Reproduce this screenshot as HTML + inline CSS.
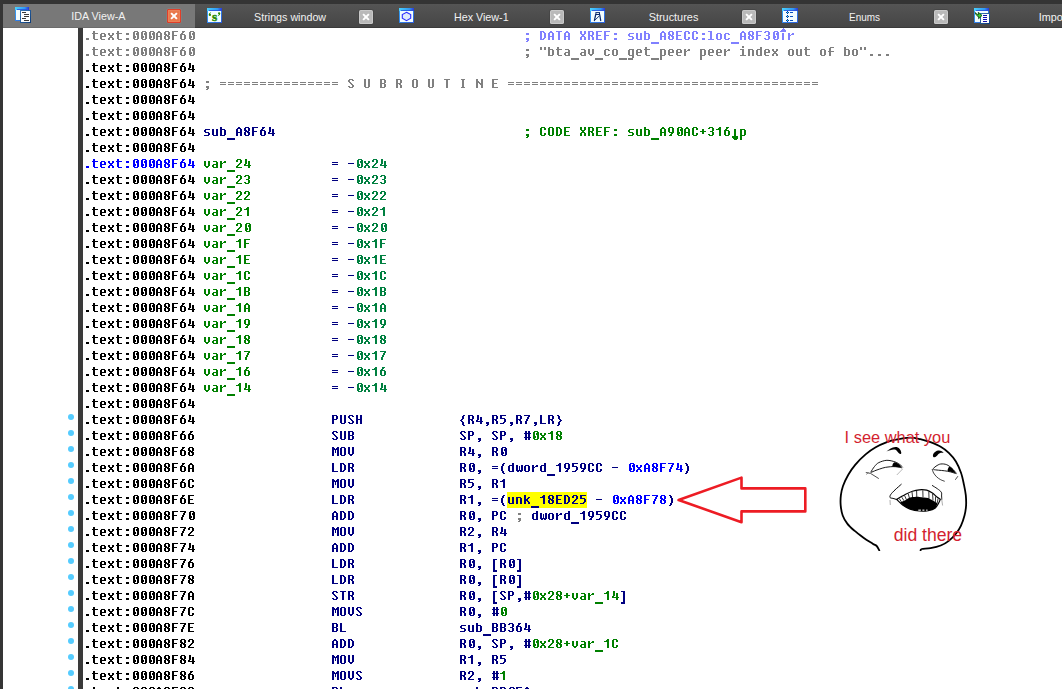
<!DOCTYPE html>
<html><head><meta charset="utf-8"><title>IDA</title>
<style>
html,body{margin:0;padding:0;background:#fff;}
body{width:1062px;height:689px;overflow:hidden;position:relative;font-family:"Liberation Sans",sans-serif;}
#bar{position:absolute;left:78px;top:28px;width:5px;height:661px;background:#3a3a3a;}
.d{position:absolute;left:68px;width:6px;height:6px;border-radius:3px;background:#55ccff;}
</style></head><body>
<div id="bar"></div>
<i class="d" style="top:414px"></i>
<i class="d" style="top:430px"></i>
<i class="d" style="top:446px"></i>
<i class="d" style="top:462px"></i>
<i class="d" style="top:478px"></i>
<i class="d" style="top:494px"></i>
<i class="d" style="top:510px"></i>
<i class="d" style="top:526px"></i>
<i class="d" style="top:542px"></i>
<i class="d" style="top:558px"></i>
<i class="d" style="top:574px"></i>
<i class="d" style="top:590px"></i>
<i class="d" style="top:606px"></i>
<i class="d" style="top:622px"></i>
<i class="d" style="top:638px"></i>
<i class="d" style="top:654px"></i>
<i class="d" style="top:670px"></i>
<i class="d" style="top:686px"></i>
<svg id="px" width="1062" height="689" viewBox="0 0 1062 689" style="position:absolute;left:0;top:0" shape-rendering="crispEdges"><defs><path id="g22" d="M0 4h2v1h-2zM4 4h2v1h-2zM0 5h2v1h-2zM4 5h2v1h-2zM0 6h2v1h-2zM4 6h2v1h-2z"/><path id="g23" d="M1 4h2v1h-2zM4 4h2v1h-2zM1 5h2v1h-2zM4 5h2v1h-2zM0 6h7v1h-7zM1 7h2v1h-2zM4 7h2v1h-2zM1 8h2v1h-2zM4 8h2v1h-2zM1 9h2v1h-2zM4 9h2v1h-2zM0 10h7v1h-7zM1 11h2v1h-2zM4 11h2v1h-2zM1 12h2v1h-2zM4 12h2v1h-2z"/><path id="g28" d="M3 4h2v1h-2zM2 5h2v1h-2zM2 6h2v1h-2zM1 7h2v1h-2zM1 8h2v1h-2zM1 9h2v1h-2zM1 10h2v1h-2zM1 11h2v1h-2zM2 12h2v1h-2zM2 13h2v1h-2zM3 14h2v1h-2z"/><path id="g29" d="M1 4h2v1h-2zM2 5h2v1h-2zM2 6h2v1h-2zM3 7h2v1h-2zM3 8h2v1h-2zM3 9h2v1h-2zM3 10h2v1h-2zM3 11h2v1h-2zM2 12h2v1h-2zM2 13h2v1h-2zM1 14h2v1h-2z"/><path id="g2b" d="M2 6h2v1h-2zM2 7h2v1h-2zM0 8h6v1h-6zM2 9h2v1h-2zM2 10h2v1h-2z"/><path id="g2c" d="M2 11h3v1h-3zM2 12h3v1h-3zM3 13h2v1h-2zM2 14h2v1h-2z"/><path id="g2d" d="M0 8h6v1h-6z"/><path id="g2e" d="M2 11h3v1h-3zM2 12h3v1h-3z"/><path id="g30" d="M2 4h4v1h-4zM1 5h2v1h-2zM5 5h2v1h-2zM1 6h2v1h-2zM4 6h3v1h-3zM1 7h2v1h-2zM4 7h3v1h-3zM1 8h2v1h-2zM5 8h2v1h-2zM1 9h3v1h-3zM5 9h2v1h-2zM1 10h3v1h-3zM5 10h2v1h-2zM1 11h2v1h-2zM5 11h2v1h-2zM2 12h4v1h-4z"/><path id="g31" d="M3 4h2v1h-2zM2 5h3v1h-3zM0 6h5v1h-5zM3 7h2v1h-2zM3 8h2v1h-2zM3 9h2v1h-2zM3 10h2v1h-2zM3 11h2v1h-2zM3 12h2v1h-2z"/><path id="g32" d="M1 4h4v1h-4zM0 5h2v1h-2zM4 5h2v1h-2zM0 6h2v1h-2zM4 6h2v1h-2zM4 7h2v1h-2zM3 8h2v1h-2zM2 9h2v1h-2zM1 10h2v1h-2zM0 11h2v1h-2zM0 12h6v1h-6z"/><path id="g33" d="M1 4h4v1h-4zM0 5h2v1h-2zM4 5h2v1h-2zM4 6h2v1h-2zM4 7h2v1h-2zM2 8h3v1h-3zM4 9h2v1h-2zM4 10h2v1h-2zM0 11h2v1h-2zM4 11h2v1h-2zM1 12h4v1h-4z"/><path id="g34" d="M1 4h2v1h-2zM1 5h2v1h-2zM1 6h2v1h-2zM4 6h2v1h-2zM1 7h2v1h-2zM4 7h2v1h-2zM1 8h2v1h-2zM4 8h2v1h-2zM0 9h2v1h-2zM4 9h2v1h-2zM0 10h7v1h-7zM4 11h2v1h-2zM4 12h2v1h-2z"/><path id="g35" d="M0 4h6v1h-6zM0 5h2v1h-2zM0 6h2v1h-2zM0 7h5v1h-5zM4 8h2v1h-2zM4 9h2v1h-2zM4 10h2v1h-2zM3 11h2v1h-2zM0 12h4v1h-4z"/><path id="g36" d="M2 4h3v1h-3zM2 5h2v1h-2zM1 6h2v1h-2zM0 7h5v1h-5zM0 8h2v1h-2zM4 8h2v1h-2zM0 9h2v1h-2zM4 9h2v1h-2zM0 10h2v1h-2zM4 10h2v1h-2zM0 11h2v1h-2zM4 11h2v1h-2zM1 12h4v1h-4z"/><path id="g37" d="M0 4h6v1h-6zM4 5h2v1h-2zM3 6h2v1h-2zM3 7h2v1h-2zM2 8h2v1h-2zM2 9h2v1h-2zM1 10h2v1h-2zM1 11h2v1h-2zM1 12h2v1h-2z"/><path id="g38" d="M1 4h4v1h-4zM0 5h2v1h-2zM4 5h2v1h-2zM0 6h2v1h-2zM4 6h2v1h-2zM0 7h3v1h-3zM4 7h2v1h-2zM1 8h4v1h-4zM0 9h2v1h-2zM3 9h3v1h-3zM0 10h2v1h-2zM4 10h2v1h-2zM0 11h2v1h-2zM4 11h2v1h-2zM1 12h4v1h-4z"/><path id="g39" d="M1 4h4v1h-4zM0 5h2v1h-2zM4 5h2v1h-2zM0 6h2v1h-2zM4 6h2v1h-2zM0 7h2v1h-2zM4 7h2v1h-2zM0 8h2v1h-2zM4 8h2v1h-2zM1 9h5v1h-5zM3 10h2v1h-2zM2 11h2v1h-2zM1 12h3v1h-3z"/><path id="g3a" d="M2 6h3v1h-3zM2 7h3v1h-3zM2 11h3v1h-3zM2 12h3v1h-3z"/><path id="g3b" d="M2 6h3v1h-3zM2 7h3v1h-3zM2 11h3v1h-3zM2 12h3v1h-3zM3 13h2v1h-2zM2 14h2v1h-2z"/><path id="g3d" d="M0 7h6v1h-6zM0 9h6v1h-6z"/><path id="g41" d="M2 4h2v1h-2zM1 5h4v1h-4zM0 6h2v1h-2zM4 6h2v1h-2zM0 7h2v1h-2zM4 7h2v1h-2zM0 8h2v1h-2zM4 8h2v1h-2zM0 9h6v1h-6zM0 10h2v1h-2zM4 10h2v1h-2zM0 11h2v1h-2zM4 11h2v1h-2zM0 12h2v1h-2zM4 12h2v1h-2z"/><path id="g42" d="M0 4h5v1h-5zM0 5h2v1h-2zM4 5h2v1h-2zM0 6h2v1h-2zM4 6h2v1h-2zM0 7h2v1h-2zM4 7h2v1h-2zM0 8h5v1h-5zM0 9h2v1h-2zM4 9h2v1h-2zM0 10h2v1h-2zM4 10h2v1h-2zM0 11h2v1h-2zM4 11h2v1h-2zM0 12h5v1h-5z"/><path id="g43" d="M1 4h4v1h-4zM0 5h2v1h-2zM4 5h2v1h-2zM0 6h2v1h-2zM4 6h2v1h-2zM0 7h2v1h-2zM0 8h2v1h-2zM0 9h2v1h-2zM0 10h2v1h-2zM4 10h2v1h-2zM0 11h2v1h-2zM4 11h2v1h-2zM1 12h4v1h-4z"/><path id="g44" d="M0 4h4v1h-4zM0 5h2v1h-2zM3 5h2v1h-2zM0 6h2v1h-2zM4 6h2v1h-2zM0 7h2v1h-2zM4 7h2v1h-2zM0 8h2v1h-2zM4 8h2v1h-2zM0 9h2v1h-2zM4 9h2v1h-2zM0 10h2v1h-2zM4 10h2v1h-2zM0 11h2v1h-2zM3 11h2v1h-2zM0 12h4v1h-4z"/><path id="g45" d="M0 4h6v1h-6zM0 5h2v1h-2zM0 6h2v1h-2zM0 7h2v1h-2zM0 8h5v1h-5zM0 9h2v1h-2zM0 10h2v1h-2zM0 11h2v1h-2zM0 12h6v1h-6z"/><path id="g46" d="M0 4h6v1h-6zM0 5h2v1h-2zM0 6h2v1h-2zM0 7h2v1h-2zM0 8h5v1h-5zM0 9h2v1h-2zM0 10h2v1h-2zM0 11h2v1h-2zM0 12h2v1h-2z"/><path id="g48" d="M0 4h2v1h-2zM4 4h2v1h-2zM0 5h2v1h-2zM4 5h2v1h-2zM0 6h2v1h-2zM4 6h2v1h-2zM0 7h2v1h-2zM4 7h2v1h-2zM0 8h6v1h-6zM0 9h2v1h-2zM4 9h2v1h-2zM0 10h2v1h-2zM4 10h2v1h-2zM0 11h2v1h-2zM4 11h2v1h-2zM0 12h2v1h-2zM4 12h2v1h-2z"/><path id="g49" d="M1 4h4v1h-4zM2 5h2v1h-2zM2 6h2v1h-2zM2 7h2v1h-2zM2 8h2v1h-2zM2 9h2v1h-2zM2 10h2v1h-2zM2 11h2v1h-2zM1 12h4v1h-4z"/><path id="g4c" d="M0 4h2v1h-2zM0 5h2v1h-2zM0 6h2v1h-2zM0 7h2v1h-2zM0 8h2v1h-2zM0 9h2v1h-2zM0 10h2v1h-2zM0 11h2v1h-2zM0 12h6v1h-6z"/><path id="g4d" d="M0 4h2v1h-2zM5 4h2v1h-2zM0 5h3v1h-3zM4 5h3v1h-3zM0 6h7v1h-7zM0 7h2v1h-2zM3 7h1v1h-1zM5 7h2v1h-2zM0 8h2v1h-2zM3 8h1v1h-1zM5 8h2v1h-2zM0 9h2v1h-2zM3 9h1v1h-1zM5 9h2v1h-2zM0 10h2v1h-2zM5 10h2v1h-2zM0 11h2v1h-2zM5 11h2v1h-2zM0 12h2v1h-2zM5 12h2v1h-2z"/><path id="g4e" d="M0 4h2v1h-2zM5 4h2v1h-2zM0 5h2v1h-2zM5 5h2v1h-2zM0 6h3v1h-3zM5 6h2v1h-2zM0 7h4v1h-4zM5 7h2v1h-2zM0 8h2v1h-2zM3 8h4v1h-4zM0 9h2v1h-2zM4 9h3v1h-3zM0 10h2v1h-2zM5 10h2v1h-2zM0 11h2v1h-2zM5 11h2v1h-2zM0 12h2v1h-2zM5 12h2v1h-2z"/><path id="g4f" d="M1 4h4v1h-4zM0 5h2v1h-2zM4 5h2v1h-2zM0 6h2v1h-2zM4 6h2v1h-2zM0 7h2v1h-2zM4 7h2v1h-2zM0 8h2v1h-2zM4 8h2v1h-2zM0 9h2v1h-2zM4 9h2v1h-2zM0 10h2v1h-2zM4 10h2v1h-2zM0 11h2v1h-2zM4 11h2v1h-2zM1 12h4v1h-4z"/><path id="g50" d="M0 4h5v1h-5zM0 5h2v1h-2zM4 5h2v1h-2zM0 6h2v1h-2zM4 6h2v1h-2zM0 7h2v1h-2zM4 7h2v1h-2zM0 8h5v1h-5zM0 9h2v1h-2zM0 10h2v1h-2zM0 11h2v1h-2zM0 12h2v1h-2z"/><path id="g52" d="M0 4h5v1h-5zM0 5h2v1h-2zM4 5h2v1h-2zM0 6h2v1h-2zM4 6h2v1h-2zM0 7h2v1h-2zM4 7h2v1h-2zM0 8h5v1h-5zM0 9h2v1h-2zM3 9h2v1h-2zM0 10h2v1h-2zM4 10h2v1h-2zM0 11h2v1h-2zM4 11h2v1h-2zM0 12h2v1h-2zM4 12h2v1h-2z"/><path id="g53" d="M1 4h4v1h-4zM0 5h2v1h-2zM4 5h2v1h-2zM0 6h2v1h-2zM1 7h2v1h-2zM2 8h2v1h-2zM3 9h2v1h-2zM4 10h2v1h-2zM0 11h2v1h-2zM4 11h2v1h-2zM1 12h4v1h-4z"/><path id="g54" d="M0 4h6v1h-6zM2 5h2v1h-2zM2 6h2v1h-2zM2 7h2v1h-2zM2 8h2v1h-2zM2 9h2v1h-2zM2 10h2v1h-2zM2 11h2v1h-2zM2 12h2v1h-2z"/><path id="g55" d="M0 4h2v1h-2zM4 4h2v1h-2zM0 5h2v1h-2zM4 5h2v1h-2zM0 6h2v1h-2zM4 6h2v1h-2zM0 7h2v1h-2zM4 7h2v1h-2zM0 8h2v1h-2zM4 8h2v1h-2zM0 9h2v1h-2zM4 9h2v1h-2zM0 10h2v1h-2zM4 10h2v1h-2zM0 11h2v1h-2zM4 11h2v1h-2zM1 12h4v1h-4z"/><path id="g56" d="M0 4h2v1h-2zM4 4h2v1h-2zM0 5h2v1h-2zM4 5h2v1h-2zM0 6h2v1h-2zM4 6h2v1h-2zM0 7h2v1h-2zM4 7h2v1h-2zM0 8h2v1h-2zM4 8h2v1h-2zM0 9h2v1h-2zM4 9h2v1h-2zM0 10h2v1h-2zM4 10h2v1h-2zM1 11h4v1h-4zM2 12h2v1h-2z"/><path id="g58" d="M0 4h2v1h-2zM4 4h2v1h-2zM0 5h2v1h-2zM4 5h2v1h-2zM0 6h2v1h-2zM4 6h2v1h-2zM1 7h4v1h-4zM2 8h2v1h-2zM1 9h4v1h-4zM0 10h2v1h-2zM4 10h2v1h-2zM0 11h2v1h-2zM4 11h2v1h-2zM0 12h2v1h-2zM4 12h2v1h-2z"/><path id="g5b" d="M1 4h4v1h-4zM1 5h2v1h-2zM1 6h2v1h-2zM1 7h2v1h-2zM1 8h2v1h-2zM1 9h2v1h-2zM1 10h2v1h-2zM1 11h2v1h-2zM1 12h2v1h-2zM1 13h2v1h-2zM1 14h2v1h-2zM1 15h4v1h-4zM1 16h4v1h-4z"/><path id="g5d" d="M1 4h4v1h-4zM3 5h2v1h-2zM3 6h2v1h-2zM3 7h2v1h-2zM3 8h2v1h-2zM3 9h2v1h-2zM3 10h2v1h-2zM3 11h2v1h-2zM3 12h2v1h-2zM3 13h2v1h-2zM3 14h2v1h-2zM1 15h4v1h-4zM1 16h4v1h-4z"/><path id="g5f" d="M-1 15h8v1h-8zM-1 16h8v1h-8z"/><path id="g61" d="M1 6h4v1h-4zM4 7h2v1h-2zM4 8h2v1h-2zM1 9h5v1h-5zM0 10h2v1h-2zM4 10h2v1h-2zM0 11h2v1h-2zM4 11h2v1h-2zM1 12h5v1h-5z"/><path id="g62" d="M0 4h2v1h-2zM0 5h2v1h-2zM0 6h5v1h-5zM0 7h2v1h-2zM4 7h2v1h-2zM0 8h2v1h-2zM4 8h2v1h-2zM0 9h2v1h-2zM4 9h2v1h-2zM0 10h2v1h-2zM4 10h2v1h-2zM0 11h2v1h-2zM4 11h2v1h-2zM0 12h5v1h-5z"/><path id="g63" d="M1 6h4v1h-4zM0 7h2v1h-2zM4 7h2v1h-2zM0 8h2v1h-2zM0 9h2v1h-2zM0 10h2v1h-2zM0 11h2v1h-2zM4 11h2v1h-2zM1 12h4v1h-4z"/><path id="g64" d="M4 4h2v1h-2zM4 5h2v1h-2zM1 6h5v1h-5zM0 7h2v1h-2zM4 7h2v1h-2zM0 8h2v1h-2zM4 8h2v1h-2zM0 9h2v1h-2zM4 9h2v1h-2zM0 10h2v1h-2zM4 10h2v1h-2zM0 11h2v1h-2zM4 11h2v1h-2zM1 12h5v1h-5z"/><path id="g65" d="M1 6h4v1h-4zM0 7h2v1h-2zM4 7h2v1h-2zM0 8h2v1h-2zM4 8h2v1h-2zM0 9h6v1h-6zM0 10h2v1h-2zM0 11h2v1h-2zM1 12h4v1h-4z"/><path id="g66" d="M2 4h4v1h-4zM1 5h2v1h-2zM1 6h2v1h-2zM1 7h2v1h-2zM0 8h6v1h-6zM1 9h2v1h-2zM1 10h2v1h-2zM1 11h2v1h-2zM1 12h2v1h-2z"/><path id="g67" d="M1 6h5v1h-5zM0 7h2v1h-2zM4 7h2v1h-2zM0 8h2v1h-2zM4 8h2v1h-2zM0 9h2v1h-2zM4 9h2v1h-2zM0 10h2v1h-2zM4 10h2v1h-2zM0 11h2v1h-2zM4 11h2v1h-2zM1 12h5v1h-5zM4 13h2v1h-2zM4 14h2v1h-2zM0 15h5v1h-5zM0 16h5v1h-5z"/><path id="g69" d="M2 3h2v1h-2zM2 4h2v1h-2zM0 6h4v1h-4zM2 7h2v1h-2zM2 8h2v1h-2zM2 9h2v1h-2zM2 10h2v1h-2zM2 11h2v1h-2zM0 12h6v1h-6z"/><path id="g6b" d="M0 4h2v1h-2zM0 5h2v1h-2zM0 6h2v1h-2zM4 6h2v1h-2zM0 7h2v1h-2zM3 7h2v1h-2zM0 8h4v1h-4zM0 9h4v1h-4zM0 10h2v1h-2zM3 10h2v1h-2zM0 11h2v1h-2zM4 11h2v1h-2zM0 12h2v1h-2zM4 12h2v1h-2z"/><path id="g6c" d="M0 4h4v1h-4zM2 5h2v1h-2zM2 6h2v1h-2zM2 7h2v1h-2zM2 8h2v1h-2zM2 9h2v1h-2zM2 10h2v1h-2zM2 11h2v1h-2zM0 12h6v1h-6z"/><path id="g6e" d="M0 6h5v1h-5zM0 7h2v1h-2zM4 7h2v1h-2zM0 8h2v1h-2zM4 8h2v1h-2zM0 9h2v1h-2zM4 9h2v1h-2zM0 10h2v1h-2zM4 10h2v1h-2zM0 11h2v1h-2zM4 11h2v1h-2zM0 12h2v1h-2zM4 12h2v1h-2z"/><path id="g6f" d="M1 6h4v1h-4zM0 7h2v1h-2zM4 7h2v1h-2zM0 8h2v1h-2zM4 8h2v1h-2zM0 9h2v1h-2zM4 9h2v1h-2zM0 10h2v1h-2zM4 10h2v1h-2zM0 11h2v1h-2zM4 11h2v1h-2zM1 12h4v1h-4z"/><path id="g70" d="M0 6h5v1h-5zM0 7h2v1h-2zM4 7h2v1h-2zM0 8h2v1h-2zM4 8h2v1h-2zM0 9h2v1h-2zM4 9h2v1h-2zM0 10h2v1h-2zM4 10h2v1h-2zM0 11h2v1h-2zM4 11h2v1h-2zM0 12h5v1h-5zM0 13h2v1h-2zM0 14h2v1h-2zM0 15h2v1h-2zM0 16h2v1h-2z"/><path id="g72" d="M0 6h2v1h-2zM4 6h2v1h-2zM0 7h2v1h-2zM3 7h3v1h-3zM0 8h3v1h-3zM0 9h2v1h-2zM0 10h2v1h-2zM0 11h2v1h-2zM0 12h2v1h-2z"/><path id="g73" d="M1 6h5v1h-5zM0 7h2v1h-2zM0 8h2v1h-2zM1 9h4v1h-4zM4 10h2v1h-2zM4 11h2v1h-2zM0 12h5v1h-5z"/><path id="g74" d="M1 4h2v1h-2zM1 5h2v1h-2zM0 6h6v1h-6zM1 7h2v1h-2zM1 8h2v1h-2zM1 9h2v1h-2zM1 10h2v1h-2zM1 11h2v1h-2zM2 12h4v1h-4z"/><path id="g75" d="M0 6h2v1h-2zM4 6h2v1h-2zM0 7h2v1h-2zM4 7h2v1h-2zM0 8h2v1h-2zM4 8h2v1h-2zM0 9h2v1h-2zM4 9h2v1h-2zM0 10h2v1h-2zM4 10h2v1h-2zM0 11h2v1h-2zM4 11h2v1h-2zM1 12h5v1h-5z"/><path id="g76" d="M0 6h2v1h-2zM4 6h2v1h-2zM0 7h2v1h-2zM4 7h2v1h-2zM0 8h2v1h-2zM4 8h2v1h-2zM0 9h2v1h-2zM4 9h2v1h-2zM0 10h2v1h-2zM4 10h2v1h-2zM1 11h4v1h-4zM2 12h2v1h-2z"/><path id="g77" d="M0 6h2v1h-2zM5 6h2v1h-2zM0 7h2v1h-2zM3 7h1v1h-1zM5 7h2v1h-2zM0 8h2v1h-2zM3 8h1v1h-1zM5 8h2v1h-2zM0 9h2v1h-2zM3 9h1v1h-1zM5 9h2v1h-2zM0 10h2v1h-2zM3 10h1v1h-1zM5 10h2v1h-2zM0 11h7v1h-7zM1 12h2v1h-2zM4 12h2v1h-2z"/><path id="g78" d="M0 6h2v1h-2zM4 6h2v1h-2zM0 7h2v1h-2zM4 7h2v1h-2zM1 8h4v1h-4zM2 9h2v1h-2zM1 10h4v1h-4zM0 11h2v1h-2zM4 11h2v1h-2zM0 12h2v1h-2zM4 12h2v1h-2z"/><path id="g7b" d="M3 4h2v1h-2zM2 5h2v1h-2zM2 6h2v1h-2zM2 7h2v1h-2zM1 8h2v1h-2zM0 9h2v1h-2zM1 10h2v1h-2zM2 11h2v1h-2zM2 12h2v1h-2zM2 13h2v1h-2zM3 14h2v1h-2z"/><path id="g7d" d="M1 4h2v1h-2zM2 5h2v1h-2zM2 6h2v1h-2zM2 7h2v1h-2zM3 8h2v1h-2zM4 9h2v1h-2zM3 10h2v1h-2zM2 11h2v1h-2zM2 12h2v1h-2zM2 13h2v1h-2zM1 14h2v1h-2z"/><path id="g2191" d="M3 1h1v1h-1zM2 2h3v1h-3zM1 3h5v1h-5zM0 4h6v1h-6zM2 6h2v1h-2zM2 7h2v1h-2zM2 8h2v1h-2zM2 9h2v1h-2zM2 10h2v1h-2zM2 11h2v1h-2zM2 12h2v1h-2z"/><path id="g2193" d="M2 6h2v1h-2zM2 7h2v1h-2zM2 8h2v1h-2zM2 9h2v1h-2zM2 10h2v1h-2zM2 11h2v1h-2zM2 12h2v1h-2zM0 13h6v1h-6zM0 14h6v1h-6zM1 15h5v1h-5zM2 16h3v1h-3z"/></defs><g transform="translate(84 27)"><g fill="#808080"><use href="#g2e" x="0"/><use href="#g74" x="8"/><use href="#g65" x="16"/><use href="#g78" x="24"/><use href="#g74" x="32"/><use href="#g3a" x="40"/><use href="#g30" x="48"/><use href="#g30" x="56"/><use href="#g30" x="64"/><use href="#g41" x="72"/><use href="#g38" x="80"/><use href="#g46" x="88"/><use href="#g36" x="96"/><use href="#g30" x="104"/></g><g fill="#8080ff"><use href="#g3b" x="440"/><use href="#g44" x="456"/><use href="#g41" x="464"/><use href="#g54" x="472"/><use href="#g41" x="480"/><use href="#g58" x="496"/><use href="#g52" x="504"/><use href="#g45" x="512"/><use href="#g46" x="520"/><use href="#g3a" x="528"/><use href="#g73" x="544"/><use href="#g75" x="552"/><use href="#g62" x="560"/><use href="#g5f" x="568"/><use href="#g41" x="576"/><use href="#g38" x="584"/><use href="#g45" x="592"/><use href="#g43" x="600"/><use href="#g43" x="608"/><use href="#g3a" x="616"/><use href="#g6c" x="624"/><use href="#g6f" x="632"/><use href="#g63" x="640"/><use href="#g5f" x="648"/><use href="#g41" x="656"/><use href="#g38" x="664"/><use href="#g46" x="672"/><use href="#g33" x="680"/><use href="#g30" x="688"/><use href="#g2191" x="696"/><use href="#g72" x="704"/></g></g>
<g transform="translate(84 43)"><g fill="#808080"><use href="#g2e" x="0"/><use href="#g74" x="8"/><use href="#g65" x="16"/><use href="#g78" x="24"/><use href="#g74" x="32"/><use href="#g3a" x="40"/><use href="#g30" x="48"/><use href="#g30" x="56"/><use href="#g30" x="64"/><use href="#g41" x="72"/><use href="#g38" x="80"/><use href="#g46" x="88"/><use href="#g36" x="96"/><use href="#g30" x="104"/></g><g fill="#808080"><use href="#g3b" x="440"/><use href="#g22" x="456"/><use href="#g62" x="464"/><use href="#g74" x="472"/><use href="#g61" x="480"/><use href="#g5f" x="488"/><use href="#g61" x="496"/><use href="#g76" x="504"/><use href="#g5f" x="512"/><use href="#g63" x="520"/><use href="#g6f" x="528"/><use href="#g5f" x="536"/><use href="#g67" x="544"/><use href="#g65" x="552"/><use href="#g74" x="560"/><use href="#g5f" x="568"/><use href="#g70" x="576"/><use href="#g65" x="584"/><use href="#g65" x="592"/><use href="#g72" x="600"/><use href="#g70" x="616"/><use href="#g65" x="624"/><use href="#g65" x="632"/><use href="#g72" x="640"/><use href="#g69" x="656"/><use href="#g6e" x="664"/><use href="#g64" x="672"/><use href="#g65" x="680"/><use href="#g78" x="688"/><use href="#g6f" x="704"/><use href="#g75" x="712"/><use href="#g74" x="720"/><use href="#g6f" x="736"/><use href="#g66" x="744"/><use href="#g62" x="760"/><use href="#g6f" x="768"/><use href="#g22" x="776"/><use href="#g2e" x="784"/><use href="#g2e" x="792"/><use href="#g2e" x="800"/></g></g>
<g transform="translate(84 59)"><g fill="#000000"><use href="#g2e" x="0"/><use href="#g74" x="8"/><use href="#g65" x="16"/><use href="#g78" x="24"/><use href="#g74" x="32"/><use href="#g3a" x="40"/><use href="#g30" x="48"/><use href="#g30" x="56"/><use href="#g30" x="64"/><use href="#g41" x="72"/><use href="#g38" x="80"/><use href="#g46" x="88"/><use href="#g36" x="96"/><use href="#g34" x="104"/></g></g>
<g transform="translate(84 75)"><g fill="#000000"><use href="#g2e" x="0"/><use href="#g74" x="8"/><use href="#g65" x="16"/><use href="#g78" x="24"/><use href="#g74" x="32"/><use href="#g3a" x="40"/><use href="#g30" x="48"/><use href="#g30" x="56"/><use href="#g30" x="64"/><use href="#g41" x="72"/><use href="#g38" x="80"/><use href="#g46" x="88"/><use href="#g36" x="96"/><use href="#g34" x="104"/></g><g fill="#808080"><use href="#g3b" x="120"/><use href="#g3d" x="136"/><use href="#g3d" x="144"/><use href="#g3d" x="152"/><use href="#g3d" x="160"/><use href="#g3d" x="168"/><use href="#g3d" x="176"/><use href="#g3d" x="184"/><use href="#g3d" x="192"/><use href="#g3d" x="200"/><use href="#g3d" x="208"/><use href="#g3d" x="216"/><use href="#g3d" x="224"/><use href="#g3d" x="232"/><use href="#g3d" x="240"/><use href="#g3d" x="248"/><use href="#g53" x="264"/><use href="#g55" x="280"/><use href="#g42" x="296"/><use href="#g52" x="312"/><use href="#g4f" x="328"/><use href="#g55" x="344"/><use href="#g54" x="360"/><use href="#g49" x="376"/><use href="#g4e" x="392"/><use href="#g45" x="408"/><use href="#g3d" x="424"/><use href="#g3d" x="432"/><use href="#g3d" x="440"/><use href="#g3d" x="448"/><use href="#g3d" x="456"/><use href="#g3d" x="464"/><use href="#g3d" x="472"/><use href="#g3d" x="480"/><use href="#g3d" x="488"/><use href="#g3d" x="496"/><use href="#g3d" x="504"/><use href="#g3d" x="512"/><use href="#g3d" x="520"/><use href="#g3d" x="528"/><use href="#g3d" x="536"/><use href="#g3d" x="544"/><use href="#g3d" x="552"/><use href="#g3d" x="560"/><use href="#g3d" x="568"/><use href="#g3d" x="576"/><use href="#g3d" x="584"/><use href="#g3d" x="592"/><use href="#g3d" x="600"/><use href="#g3d" x="608"/><use href="#g3d" x="616"/><use href="#g3d" x="624"/><use href="#g3d" x="632"/><use href="#g3d" x="640"/><use href="#g3d" x="648"/><use href="#g3d" x="656"/><use href="#g3d" x="664"/><use href="#g3d" x="672"/><use href="#g3d" x="680"/><use href="#g3d" x="688"/><use href="#g3d" x="696"/><use href="#g3d" x="704"/><use href="#g3d" x="712"/><use href="#g3d" x="720"/><use href="#g3d" x="728"/></g></g>
<g transform="translate(84 91)"><g fill="#000000"><use href="#g2e" x="0"/><use href="#g74" x="8"/><use href="#g65" x="16"/><use href="#g78" x="24"/><use href="#g74" x="32"/><use href="#g3a" x="40"/><use href="#g30" x="48"/><use href="#g30" x="56"/><use href="#g30" x="64"/><use href="#g41" x="72"/><use href="#g38" x="80"/><use href="#g46" x="88"/><use href="#g36" x="96"/><use href="#g34" x="104"/></g></g>
<g transform="translate(84 107)"><g fill="#000000"><use href="#g2e" x="0"/><use href="#g74" x="8"/><use href="#g65" x="16"/><use href="#g78" x="24"/><use href="#g74" x="32"/><use href="#g3a" x="40"/><use href="#g30" x="48"/><use href="#g30" x="56"/><use href="#g30" x="64"/><use href="#g41" x="72"/><use href="#g38" x="80"/><use href="#g46" x="88"/><use href="#g36" x="96"/><use href="#g34" x="104"/></g></g>
<g transform="translate(84 123)"><g fill="#000000"><use href="#g2e" x="0"/><use href="#g74" x="8"/><use href="#g65" x="16"/><use href="#g78" x="24"/><use href="#g74" x="32"/><use href="#g3a" x="40"/><use href="#g30" x="48"/><use href="#g30" x="56"/><use href="#g30" x="64"/><use href="#g41" x="72"/><use href="#g38" x="80"/><use href="#g46" x="88"/><use href="#g36" x="96"/><use href="#g34" x="104"/></g><g fill="#000080"><use href="#g73" x="120"/><use href="#g75" x="128"/><use href="#g62" x="136"/><use href="#g5f" x="144"/><use href="#g41" x="152"/><use href="#g38" x="160"/><use href="#g46" x="168"/><use href="#g36" x="176"/><use href="#g34" x="184"/></g><g fill="#008000"><use href="#g3b" x="440"/><use href="#g43" x="456"/><use href="#g4f" x="464"/><use href="#g44" x="472"/><use href="#g45" x="480"/><use href="#g58" x="496"/><use href="#g52" x="504"/><use href="#g45" x="512"/><use href="#g46" x="520"/><use href="#g3a" x="528"/><use href="#g73" x="544"/><use href="#g75" x="552"/><use href="#g62" x="560"/><use href="#g5f" x="568"/><use href="#g41" x="576"/><use href="#g39" x="584"/><use href="#g30" x="592"/><use href="#g41" x="600"/><use href="#g43" x="608"/><use href="#g2b" x="616"/><use href="#g33" x="624"/><use href="#g31" x="632"/><use href="#g36" x="640"/><use href="#g2193" x="648"/><use href="#g70" x="656"/></g></g>
<g transform="translate(84 139)"><g fill="#000000"><use href="#g2e" x="0"/><use href="#g74" x="8"/><use href="#g65" x="16"/><use href="#g78" x="24"/><use href="#g74" x="32"/><use href="#g3a" x="40"/><use href="#g30" x="48"/><use href="#g30" x="56"/><use href="#g30" x="64"/><use href="#g41" x="72"/><use href="#g38" x="80"/><use href="#g46" x="88"/><use href="#g36" x="96"/><use href="#g34" x="104"/></g></g>
<g transform="translate(84 155)"><g fill="#0000ff"><use href="#g2e" x="0"/><use href="#g74" x="8"/><use href="#g65" x="16"/><use href="#g78" x="24"/><use href="#g74" x="32"/><use href="#g3a" x="40"/><use href="#g30" x="48"/><use href="#g30" x="56"/><use href="#g30" x="64"/><use href="#g41" x="72"/><use href="#g38" x="80"/><use href="#g46" x="88"/><use href="#g36" x="96"/><use href="#g34" x="104"/></g><g fill="#008000"><use href="#g76" x="120"/><use href="#g61" x="128"/><use href="#g72" x="136"/><use href="#g5f" x="144"/><use href="#g32" x="152"/><use href="#g34" x="160"/></g><g fill="#000080"><use href="#g3d" x="248"/><use href="#g2d" x="264"/></g><g fill="#008040"><use href="#g30" x="272"/><use href="#g78" x="280"/><use href="#g32" x="288"/><use href="#g34" x="296"/></g></g>
<g transform="translate(84 171)"><g fill="#000000"><use href="#g2e" x="0"/><use href="#g74" x="8"/><use href="#g65" x="16"/><use href="#g78" x="24"/><use href="#g74" x="32"/><use href="#g3a" x="40"/><use href="#g30" x="48"/><use href="#g30" x="56"/><use href="#g30" x="64"/><use href="#g41" x="72"/><use href="#g38" x="80"/><use href="#g46" x="88"/><use href="#g36" x="96"/><use href="#g34" x="104"/></g><g fill="#008000"><use href="#g76" x="120"/><use href="#g61" x="128"/><use href="#g72" x="136"/><use href="#g5f" x="144"/><use href="#g32" x="152"/><use href="#g33" x="160"/></g><g fill="#000080"><use href="#g3d" x="248"/><use href="#g2d" x="264"/></g><g fill="#008040"><use href="#g30" x="272"/><use href="#g78" x="280"/><use href="#g32" x="288"/><use href="#g33" x="296"/></g></g>
<g transform="translate(84 187)"><g fill="#000000"><use href="#g2e" x="0"/><use href="#g74" x="8"/><use href="#g65" x="16"/><use href="#g78" x="24"/><use href="#g74" x="32"/><use href="#g3a" x="40"/><use href="#g30" x="48"/><use href="#g30" x="56"/><use href="#g30" x="64"/><use href="#g41" x="72"/><use href="#g38" x="80"/><use href="#g46" x="88"/><use href="#g36" x="96"/><use href="#g34" x="104"/></g><g fill="#008000"><use href="#g76" x="120"/><use href="#g61" x="128"/><use href="#g72" x="136"/><use href="#g5f" x="144"/><use href="#g32" x="152"/><use href="#g32" x="160"/></g><g fill="#000080"><use href="#g3d" x="248"/><use href="#g2d" x="264"/></g><g fill="#008040"><use href="#g30" x="272"/><use href="#g78" x="280"/><use href="#g32" x="288"/><use href="#g32" x="296"/></g></g>
<g transform="translate(84 203)"><g fill="#000000"><use href="#g2e" x="0"/><use href="#g74" x="8"/><use href="#g65" x="16"/><use href="#g78" x="24"/><use href="#g74" x="32"/><use href="#g3a" x="40"/><use href="#g30" x="48"/><use href="#g30" x="56"/><use href="#g30" x="64"/><use href="#g41" x="72"/><use href="#g38" x="80"/><use href="#g46" x="88"/><use href="#g36" x="96"/><use href="#g34" x="104"/></g><g fill="#008000"><use href="#g76" x="120"/><use href="#g61" x="128"/><use href="#g72" x="136"/><use href="#g5f" x="144"/><use href="#g32" x="152"/><use href="#g31" x="160"/></g><g fill="#000080"><use href="#g3d" x="248"/><use href="#g2d" x="264"/></g><g fill="#008040"><use href="#g30" x="272"/><use href="#g78" x="280"/><use href="#g32" x="288"/><use href="#g31" x="296"/></g></g>
<g transform="translate(84 219)"><g fill="#000000"><use href="#g2e" x="0"/><use href="#g74" x="8"/><use href="#g65" x="16"/><use href="#g78" x="24"/><use href="#g74" x="32"/><use href="#g3a" x="40"/><use href="#g30" x="48"/><use href="#g30" x="56"/><use href="#g30" x="64"/><use href="#g41" x="72"/><use href="#g38" x="80"/><use href="#g46" x="88"/><use href="#g36" x="96"/><use href="#g34" x="104"/></g><g fill="#008000"><use href="#g76" x="120"/><use href="#g61" x="128"/><use href="#g72" x="136"/><use href="#g5f" x="144"/><use href="#g32" x="152"/><use href="#g30" x="160"/></g><g fill="#000080"><use href="#g3d" x="248"/><use href="#g2d" x="264"/></g><g fill="#008040"><use href="#g30" x="272"/><use href="#g78" x="280"/><use href="#g32" x="288"/><use href="#g30" x="296"/></g></g>
<g transform="translate(84 235)"><g fill="#000000"><use href="#g2e" x="0"/><use href="#g74" x="8"/><use href="#g65" x="16"/><use href="#g78" x="24"/><use href="#g74" x="32"/><use href="#g3a" x="40"/><use href="#g30" x="48"/><use href="#g30" x="56"/><use href="#g30" x="64"/><use href="#g41" x="72"/><use href="#g38" x="80"/><use href="#g46" x="88"/><use href="#g36" x="96"/><use href="#g34" x="104"/></g><g fill="#008000"><use href="#g76" x="120"/><use href="#g61" x="128"/><use href="#g72" x="136"/><use href="#g5f" x="144"/><use href="#g31" x="152"/><use href="#g46" x="160"/></g><g fill="#000080"><use href="#g3d" x="248"/><use href="#g2d" x="264"/></g><g fill="#008040"><use href="#g30" x="272"/><use href="#g78" x="280"/><use href="#g31" x="288"/><use href="#g46" x="296"/></g></g>
<g transform="translate(84 251)"><g fill="#000000"><use href="#g2e" x="0"/><use href="#g74" x="8"/><use href="#g65" x="16"/><use href="#g78" x="24"/><use href="#g74" x="32"/><use href="#g3a" x="40"/><use href="#g30" x="48"/><use href="#g30" x="56"/><use href="#g30" x="64"/><use href="#g41" x="72"/><use href="#g38" x="80"/><use href="#g46" x="88"/><use href="#g36" x="96"/><use href="#g34" x="104"/></g><g fill="#008000"><use href="#g76" x="120"/><use href="#g61" x="128"/><use href="#g72" x="136"/><use href="#g5f" x="144"/><use href="#g31" x="152"/><use href="#g45" x="160"/></g><g fill="#000080"><use href="#g3d" x="248"/><use href="#g2d" x="264"/></g><g fill="#008040"><use href="#g30" x="272"/><use href="#g78" x="280"/><use href="#g31" x="288"/><use href="#g45" x="296"/></g></g>
<g transform="translate(84 267)"><g fill="#000000"><use href="#g2e" x="0"/><use href="#g74" x="8"/><use href="#g65" x="16"/><use href="#g78" x="24"/><use href="#g74" x="32"/><use href="#g3a" x="40"/><use href="#g30" x="48"/><use href="#g30" x="56"/><use href="#g30" x="64"/><use href="#g41" x="72"/><use href="#g38" x="80"/><use href="#g46" x="88"/><use href="#g36" x="96"/><use href="#g34" x="104"/></g><g fill="#008000"><use href="#g76" x="120"/><use href="#g61" x="128"/><use href="#g72" x="136"/><use href="#g5f" x="144"/><use href="#g31" x="152"/><use href="#g43" x="160"/></g><g fill="#000080"><use href="#g3d" x="248"/><use href="#g2d" x="264"/></g><g fill="#008040"><use href="#g30" x="272"/><use href="#g78" x="280"/><use href="#g31" x="288"/><use href="#g43" x="296"/></g></g>
<g transform="translate(84 283)"><g fill="#000000"><use href="#g2e" x="0"/><use href="#g74" x="8"/><use href="#g65" x="16"/><use href="#g78" x="24"/><use href="#g74" x="32"/><use href="#g3a" x="40"/><use href="#g30" x="48"/><use href="#g30" x="56"/><use href="#g30" x="64"/><use href="#g41" x="72"/><use href="#g38" x="80"/><use href="#g46" x="88"/><use href="#g36" x="96"/><use href="#g34" x="104"/></g><g fill="#008000"><use href="#g76" x="120"/><use href="#g61" x="128"/><use href="#g72" x="136"/><use href="#g5f" x="144"/><use href="#g31" x="152"/><use href="#g42" x="160"/></g><g fill="#000080"><use href="#g3d" x="248"/><use href="#g2d" x="264"/></g><g fill="#008040"><use href="#g30" x="272"/><use href="#g78" x="280"/><use href="#g31" x="288"/><use href="#g42" x="296"/></g></g>
<g transform="translate(84 299)"><g fill="#000000"><use href="#g2e" x="0"/><use href="#g74" x="8"/><use href="#g65" x="16"/><use href="#g78" x="24"/><use href="#g74" x="32"/><use href="#g3a" x="40"/><use href="#g30" x="48"/><use href="#g30" x="56"/><use href="#g30" x="64"/><use href="#g41" x="72"/><use href="#g38" x="80"/><use href="#g46" x="88"/><use href="#g36" x="96"/><use href="#g34" x="104"/></g><g fill="#008000"><use href="#g76" x="120"/><use href="#g61" x="128"/><use href="#g72" x="136"/><use href="#g5f" x="144"/><use href="#g31" x="152"/><use href="#g41" x="160"/></g><g fill="#000080"><use href="#g3d" x="248"/><use href="#g2d" x="264"/></g><g fill="#008040"><use href="#g30" x="272"/><use href="#g78" x="280"/><use href="#g31" x="288"/><use href="#g41" x="296"/></g></g>
<g transform="translate(84 315)"><g fill="#000000"><use href="#g2e" x="0"/><use href="#g74" x="8"/><use href="#g65" x="16"/><use href="#g78" x="24"/><use href="#g74" x="32"/><use href="#g3a" x="40"/><use href="#g30" x="48"/><use href="#g30" x="56"/><use href="#g30" x="64"/><use href="#g41" x="72"/><use href="#g38" x="80"/><use href="#g46" x="88"/><use href="#g36" x="96"/><use href="#g34" x="104"/></g><g fill="#008000"><use href="#g76" x="120"/><use href="#g61" x="128"/><use href="#g72" x="136"/><use href="#g5f" x="144"/><use href="#g31" x="152"/><use href="#g39" x="160"/></g><g fill="#000080"><use href="#g3d" x="248"/><use href="#g2d" x="264"/></g><g fill="#008040"><use href="#g30" x="272"/><use href="#g78" x="280"/><use href="#g31" x="288"/><use href="#g39" x="296"/></g></g>
<g transform="translate(84 331)"><g fill="#000000"><use href="#g2e" x="0"/><use href="#g74" x="8"/><use href="#g65" x="16"/><use href="#g78" x="24"/><use href="#g74" x="32"/><use href="#g3a" x="40"/><use href="#g30" x="48"/><use href="#g30" x="56"/><use href="#g30" x="64"/><use href="#g41" x="72"/><use href="#g38" x="80"/><use href="#g46" x="88"/><use href="#g36" x="96"/><use href="#g34" x="104"/></g><g fill="#008000"><use href="#g76" x="120"/><use href="#g61" x="128"/><use href="#g72" x="136"/><use href="#g5f" x="144"/><use href="#g31" x="152"/><use href="#g38" x="160"/></g><g fill="#000080"><use href="#g3d" x="248"/><use href="#g2d" x="264"/></g><g fill="#008040"><use href="#g30" x="272"/><use href="#g78" x="280"/><use href="#g31" x="288"/><use href="#g38" x="296"/></g></g>
<g transform="translate(84 347)"><g fill="#000000"><use href="#g2e" x="0"/><use href="#g74" x="8"/><use href="#g65" x="16"/><use href="#g78" x="24"/><use href="#g74" x="32"/><use href="#g3a" x="40"/><use href="#g30" x="48"/><use href="#g30" x="56"/><use href="#g30" x="64"/><use href="#g41" x="72"/><use href="#g38" x="80"/><use href="#g46" x="88"/><use href="#g36" x="96"/><use href="#g34" x="104"/></g><g fill="#008000"><use href="#g76" x="120"/><use href="#g61" x="128"/><use href="#g72" x="136"/><use href="#g5f" x="144"/><use href="#g31" x="152"/><use href="#g37" x="160"/></g><g fill="#000080"><use href="#g3d" x="248"/><use href="#g2d" x="264"/></g><g fill="#008040"><use href="#g30" x="272"/><use href="#g78" x="280"/><use href="#g31" x="288"/><use href="#g37" x="296"/></g></g>
<g transform="translate(84 363)"><g fill="#000000"><use href="#g2e" x="0"/><use href="#g74" x="8"/><use href="#g65" x="16"/><use href="#g78" x="24"/><use href="#g74" x="32"/><use href="#g3a" x="40"/><use href="#g30" x="48"/><use href="#g30" x="56"/><use href="#g30" x="64"/><use href="#g41" x="72"/><use href="#g38" x="80"/><use href="#g46" x="88"/><use href="#g36" x="96"/><use href="#g34" x="104"/></g><g fill="#008000"><use href="#g76" x="120"/><use href="#g61" x="128"/><use href="#g72" x="136"/><use href="#g5f" x="144"/><use href="#g31" x="152"/><use href="#g36" x="160"/></g><g fill="#000080"><use href="#g3d" x="248"/><use href="#g2d" x="264"/></g><g fill="#008040"><use href="#g30" x="272"/><use href="#g78" x="280"/><use href="#g31" x="288"/><use href="#g36" x="296"/></g></g>
<g transform="translate(84 379)"><g fill="#000000"><use href="#g2e" x="0"/><use href="#g74" x="8"/><use href="#g65" x="16"/><use href="#g78" x="24"/><use href="#g74" x="32"/><use href="#g3a" x="40"/><use href="#g30" x="48"/><use href="#g30" x="56"/><use href="#g30" x="64"/><use href="#g41" x="72"/><use href="#g38" x="80"/><use href="#g46" x="88"/><use href="#g36" x="96"/><use href="#g34" x="104"/></g><g fill="#008000"><use href="#g76" x="120"/><use href="#g61" x="128"/><use href="#g72" x="136"/><use href="#g5f" x="144"/><use href="#g31" x="152"/><use href="#g34" x="160"/></g><g fill="#000080"><use href="#g3d" x="248"/><use href="#g2d" x="264"/></g><g fill="#008040"><use href="#g30" x="272"/><use href="#g78" x="280"/><use href="#g31" x="288"/><use href="#g34" x="296"/></g></g>
<g transform="translate(84 395)"><g fill="#000000"><use href="#g2e" x="0"/><use href="#g74" x="8"/><use href="#g65" x="16"/><use href="#g78" x="24"/><use href="#g74" x="32"/><use href="#g3a" x="40"/><use href="#g30" x="48"/><use href="#g30" x="56"/><use href="#g30" x="64"/><use href="#g41" x="72"/><use href="#g38" x="80"/><use href="#g46" x="88"/><use href="#g36" x="96"/><use href="#g34" x="104"/></g></g>
<g transform="translate(84 411)"><g fill="#000000"><use href="#g2e" x="0"/><use href="#g74" x="8"/><use href="#g65" x="16"/><use href="#g78" x="24"/><use href="#g74" x="32"/><use href="#g3a" x="40"/><use href="#g30" x="48"/><use href="#g30" x="56"/><use href="#g30" x="64"/><use href="#g41" x="72"/><use href="#g38" x="80"/><use href="#g46" x="88"/><use href="#g36" x="96"/><use href="#g34" x="104"/></g><g fill="#000080"><use href="#g50" x="248"/><use href="#g55" x="256"/><use href="#g53" x="264"/><use href="#g48" x="272"/></g><g fill="#000080"><use href="#g7b" x="376"/><use href="#g52" x="384"/><use href="#g34" x="392"/><use href="#g2c" x="400"/><use href="#g52" x="408"/><use href="#g35" x="416"/><use href="#g2c" x="424"/><use href="#g52" x="432"/><use href="#g37" x="440"/><use href="#g2c" x="448"/><use href="#g4c" x="456"/><use href="#g52" x="464"/><use href="#g7d" x="472"/></g></g>
<g transform="translate(84 427)"><g fill="#000000"><use href="#g2e" x="0"/><use href="#g74" x="8"/><use href="#g65" x="16"/><use href="#g78" x="24"/><use href="#g74" x="32"/><use href="#g3a" x="40"/><use href="#g30" x="48"/><use href="#g30" x="56"/><use href="#g30" x="64"/><use href="#g41" x="72"/><use href="#g38" x="80"/><use href="#g46" x="88"/><use href="#g36" x="96"/><use href="#g36" x="104"/></g><g fill="#000080"><use href="#g53" x="248"/><use href="#g55" x="256"/><use href="#g42" x="264"/></g><g fill="#000080"><use href="#g53" x="376"/><use href="#g50" x="384"/><use href="#g2c" x="392"/><use href="#g53" x="408"/><use href="#g50" x="416"/><use href="#g2c" x="424"/><use href="#g23" x="440"/></g><g fill="#008000"><use href="#g30" x="448"/><use href="#g78" x="456"/><use href="#g31" x="464"/><use href="#g38" x="472"/></g></g>
<g transform="translate(84 443)"><g fill="#000000"><use href="#g2e" x="0"/><use href="#g74" x="8"/><use href="#g65" x="16"/><use href="#g78" x="24"/><use href="#g74" x="32"/><use href="#g3a" x="40"/><use href="#g30" x="48"/><use href="#g30" x="56"/><use href="#g30" x="64"/><use href="#g41" x="72"/><use href="#g38" x="80"/><use href="#g46" x="88"/><use href="#g36" x="96"/><use href="#g38" x="104"/></g><g fill="#000080"><use href="#g4d" x="248"/><use href="#g4f" x="256"/><use href="#g56" x="264"/></g><g fill="#000080"><use href="#g52" x="376"/><use href="#g34" x="384"/><use href="#g2c" x="392"/><use href="#g52" x="408"/><use href="#g30" x="416"/></g></g>
<g transform="translate(84 459)"><g fill="#000000"><use href="#g2e" x="0"/><use href="#g74" x="8"/><use href="#g65" x="16"/><use href="#g78" x="24"/><use href="#g74" x="32"/><use href="#g3a" x="40"/><use href="#g30" x="48"/><use href="#g30" x="56"/><use href="#g30" x="64"/><use href="#g41" x="72"/><use href="#g38" x="80"/><use href="#g46" x="88"/><use href="#g36" x="96"/><use href="#g41" x="104"/></g><g fill="#000080"><use href="#g4c" x="248"/><use href="#g44" x="256"/><use href="#g52" x="264"/></g><g fill="#000080"><use href="#g52" x="376"/><use href="#g30" x="384"/><use href="#g2c" x="392"/><use href="#g3d" x="408"/><use href="#g28" x="416"/><use href="#g64" x="424"/><use href="#g77" x="432"/><use href="#g6f" x="440"/><use href="#g72" x="448"/><use href="#g64" x="456"/><use href="#g5f" x="464"/><use href="#g31" x="472"/><use href="#g39" x="480"/><use href="#g35" x="488"/><use href="#g39" x="496"/><use href="#g43" x="504"/><use href="#g43" x="512"/><use href="#g2d" x="528"/></g><g fill="#0000ff"><use href="#g30" x="544"/><use href="#g78" x="552"/><use href="#g41" x="560"/><use href="#g38" x="568"/><use href="#g46" x="576"/><use href="#g37" x="584"/><use href="#g34" x="592"/></g><g fill="#000080"><use href="#g29" x="600"/></g></g>
<g transform="translate(84 475)"><g fill="#000000"><use href="#g2e" x="0"/><use href="#g74" x="8"/><use href="#g65" x="16"/><use href="#g78" x="24"/><use href="#g74" x="32"/><use href="#g3a" x="40"/><use href="#g30" x="48"/><use href="#g30" x="56"/><use href="#g30" x="64"/><use href="#g41" x="72"/><use href="#g38" x="80"/><use href="#g46" x="88"/><use href="#g36" x="96"/><use href="#g43" x="104"/></g><g fill="#000080"><use href="#g4d" x="248"/><use href="#g4f" x="256"/><use href="#g56" x="264"/></g><g fill="#000080"><use href="#g52" x="376"/><use href="#g35" x="384"/><use href="#g2c" x="392"/><use href="#g52" x="408"/><use href="#g31" x="416"/></g></g>
<rect x="507" y="492" width="80" height="16" fill="#ffff00"/>
<g transform="translate(84 491)"><g fill="#000000"><use href="#g2e" x="0"/><use href="#g74" x="8"/><use href="#g65" x="16"/><use href="#g78" x="24"/><use href="#g74" x="32"/><use href="#g3a" x="40"/><use href="#g30" x="48"/><use href="#g30" x="56"/><use href="#g30" x="64"/><use href="#g41" x="72"/><use href="#g38" x="80"/><use href="#g46" x="88"/><use href="#g36" x="96"/><use href="#g45" x="104"/></g><g fill="#000080"><use href="#g4c" x="248"/><use href="#g44" x="256"/><use href="#g52" x="264"/></g><g fill="#000080"><use href="#g52" x="376"/><use href="#g31" x="384"/><use href="#g2c" x="392"/><use href="#g3d" x="408"/><use href="#g28" x="416"/></g><g fill="#000080"><use href="#g75" x="424"/><use href="#g6e" x="432"/><use href="#g6b" x="440"/><use href="#g5f" x="448"/><use href="#g31" x="456"/><use href="#g38" x="464"/><use href="#g45" x="472"/><use href="#g44" x="480"/><use href="#g32" x="488"/><use href="#g35" x="496"/></g><g fill="#000080"><use href="#g2d" x="512"/></g><g fill="#0000ff"><use href="#g30" x="528"/><use href="#g78" x="536"/><use href="#g41" x="544"/><use href="#g38" x="552"/><use href="#g46" x="560"/><use href="#g37" x="568"/><use href="#g38" x="576"/></g><g fill="#000080"><use href="#g29" x="584"/></g></g>
<g transform="translate(84 507)"><g fill="#000000"><use href="#g2e" x="0"/><use href="#g74" x="8"/><use href="#g65" x="16"/><use href="#g78" x="24"/><use href="#g74" x="32"/><use href="#g3a" x="40"/><use href="#g30" x="48"/><use href="#g30" x="56"/><use href="#g30" x="64"/><use href="#g41" x="72"/><use href="#g38" x="80"/><use href="#g46" x="88"/><use href="#g37" x="96"/><use href="#g30" x="104"/></g><g fill="#000080"><use href="#g41" x="248"/><use href="#g44" x="256"/><use href="#g44" x="264"/></g><g fill="#000080"><use href="#g52" x="376"/><use href="#g30" x="384"/><use href="#g2c" x="392"/><use href="#g50" x="408"/><use href="#g43" x="416"/></g><g fill="#808080"><use href="#g3b" x="432"/></g><g fill="#000080"><use href="#g64" x="448"/><use href="#g77" x="456"/><use href="#g6f" x="464"/><use href="#g72" x="472"/><use href="#g64" x="480"/><use href="#g5f" x="488"/><use href="#g31" x="496"/><use href="#g39" x="504"/><use href="#g35" x="512"/><use href="#g39" x="520"/><use href="#g43" x="528"/><use href="#g43" x="536"/></g></g>
<g transform="translate(84 523)"><g fill="#000000"><use href="#g2e" x="0"/><use href="#g74" x="8"/><use href="#g65" x="16"/><use href="#g78" x="24"/><use href="#g74" x="32"/><use href="#g3a" x="40"/><use href="#g30" x="48"/><use href="#g30" x="56"/><use href="#g30" x="64"/><use href="#g41" x="72"/><use href="#g38" x="80"/><use href="#g46" x="88"/><use href="#g37" x="96"/><use href="#g32" x="104"/></g><g fill="#000080"><use href="#g4d" x="248"/><use href="#g4f" x="256"/><use href="#g56" x="264"/></g><g fill="#000080"><use href="#g52" x="376"/><use href="#g32" x="384"/><use href="#g2c" x="392"/><use href="#g52" x="408"/><use href="#g34" x="416"/></g></g>
<g transform="translate(84 539)"><g fill="#000000"><use href="#g2e" x="0"/><use href="#g74" x="8"/><use href="#g65" x="16"/><use href="#g78" x="24"/><use href="#g74" x="32"/><use href="#g3a" x="40"/><use href="#g30" x="48"/><use href="#g30" x="56"/><use href="#g30" x="64"/><use href="#g41" x="72"/><use href="#g38" x="80"/><use href="#g46" x="88"/><use href="#g37" x="96"/><use href="#g34" x="104"/></g><g fill="#000080"><use href="#g41" x="248"/><use href="#g44" x="256"/><use href="#g44" x="264"/></g><g fill="#000080"><use href="#g52" x="376"/><use href="#g31" x="384"/><use href="#g2c" x="392"/><use href="#g50" x="408"/><use href="#g43" x="416"/></g></g>
<g transform="translate(84 555)"><g fill="#000000"><use href="#g2e" x="0"/><use href="#g74" x="8"/><use href="#g65" x="16"/><use href="#g78" x="24"/><use href="#g74" x="32"/><use href="#g3a" x="40"/><use href="#g30" x="48"/><use href="#g30" x="56"/><use href="#g30" x="64"/><use href="#g41" x="72"/><use href="#g38" x="80"/><use href="#g46" x="88"/><use href="#g37" x="96"/><use href="#g36" x="104"/></g><g fill="#000080"><use href="#g4c" x="248"/><use href="#g44" x="256"/><use href="#g52" x="264"/></g><g fill="#000080"><use href="#g52" x="376"/><use href="#g30" x="384"/><use href="#g2c" x="392"/><use href="#g5b" x="408"/><use href="#g52" x="416"/><use href="#g30" x="424"/><use href="#g5d" x="432"/></g></g>
<g transform="translate(84 571)"><g fill="#000000"><use href="#g2e" x="0"/><use href="#g74" x="8"/><use href="#g65" x="16"/><use href="#g78" x="24"/><use href="#g74" x="32"/><use href="#g3a" x="40"/><use href="#g30" x="48"/><use href="#g30" x="56"/><use href="#g30" x="64"/><use href="#g41" x="72"/><use href="#g38" x="80"/><use href="#g46" x="88"/><use href="#g37" x="96"/><use href="#g38" x="104"/></g><g fill="#000080"><use href="#g4c" x="248"/><use href="#g44" x="256"/><use href="#g52" x="264"/></g><g fill="#000080"><use href="#g52" x="376"/><use href="#g30" x="384"/><use href="#g2c" x="392"/><use href="#g5b" x="408"/><use href="#g52" x="416"/><use href="#g30" x="424"/><use href="#g5d" x="432"/></g></g>
<g transform="translate(84 587)"><g fill="#000000"><use href="#g2e" x="0"/><use href="#g74" x="8"/><use href="#g65" x="16"/><use href="#g78" x="24"/><use href="#g74" x="32"/><use href="#g3a" x="40"/><use href="#g30" x="48"/><use href="#g30" x="56"/><use href="#g30" x="64"/><use href="#g41" x="72"/><use href="#g38" x="80"/><use href="#g46" x="88"/><use href="#g37" x="96"/><use href="#g41" x="104"/></g><g fill="#000080"><use href="#g53" x="248"/><use href="#g54" x="256"/><use href="#g52" x="264"/></g><g fill="#000080"><use href="#g52" x="376"/><use href="#g30" x="384"/><use href="#g2c" x="392"/><use href="#g5b" x="408"/><use href="#g53" x="416"/><use href="#g50" x="424"/><use href="#g2c" x="432"/><use href="#g23" x="440"/></g><g fill="#008000"><use href="#g30" x="448"/><use href="#g78" x="456"/><use href="#g32" x="464"/><use href="#g38" x="472"/><use href="#g2b" x="480"/><use href="#g76" x="488"/><use href="#g61" x="496"/><use href="#g72" x="504"/><use href="#g5f" x="512"/><use href="#g31" x="520"/><use href="#g34" x="528"/></g><g fill="#000080"><use href="#g5d" x="536"/></g></g>
<g transform="translate(84 603)"><g fill="#000000"><use href="#g2e" x="0"/><use href="#g74" x="8"/><use href="#g65" x="16"/><use href="#g78" x="24"/><use href="#g74" x="32"/><use href="#g3a" x="40"/><use href="#g30" x="48"/><use href="#g30" x="56"/><use href="#g30" x="64"/><use href="#g41" x="72"/><use href="#g38" x="80"/><use href="#g46" x="88"/><use href="#g37" x="96"/><use href="#g43" x="104"/></g><g fill="#000080"><use href="#g4d" x="248"/><use href="#g4f" x="256"/><use href="#g56" x="264"/><use href="#g53" x="272"/></g><g fill="#000080"><use href="#g52" x="376"/><use href="#g30" x="384"/><use href="#g2c" x="392"/><use href="#g23" x="408"/></g><g fill="#008000"><use href="#g30" x="416"/></g></g>
<g transform="translate(84 619)"><g fill="#000000"><use href="#g2e" x="0"/><use href="#g74" x="8"/><use href="#g65" x="16"/><use href="#g78" x="24"/><use href="#g74" x="32"/><use href="#g3a" x="40"/><use href="#g30" x="48"/><use href="#g30" x="56"/><use href="#g30" x="64"/><use href="#g41" x="72"/><use href="#g38" x="80"/><use href="#g46" x="88"/><use href="#g37" x="96"/><use href="#g45" x="104"/></g><g fill="#000080"><use href="#g42" x="248"/><use href="#g4c" x="256"/></g><g fill="#000080"><use href="#g73" x="376"/><use href="#g75" x="384"/><use href="#g62" x="392"/><use href="#g5f" x="400"/><use href="#g42" x="408"/><use href="#g42" x="416"/><use href="#g33" x="424"/><use href="#g36" x="432"/><use href="#g34" x="440"/></g></g>
<g transform="translate(84 635)"><g fill="#000000"><use href="#g2e" x="0"/><use href="#g74" x="8"/><use href="#g65" x="16"/><use href="#g78" x="24"/><use href="#g74" x="32"/><use href="#g3a" x="40"/><use href="#g30" x="48"/><use href="#g30" x="56"/><use href="#g30" x="64"/><use href="#g41" x="72"/><use href="#g38" x="80"/><use href="#g46" x="88"/><use href="#g38" x="96"/><use href="#g32" x="104"/></g><g fill="#000080"><use href="#g41" x="248"/><use href="#g44" x="256"/><use href="#g44" x="264"/></g><g fill="#000080"><use href="#g52" x="376"/><use href="#g30" x="384"/><use href="#g2c" x="392"/><use href="#g53" x="408"/><use href="#g50" x="416"/><use href="#g2c" x="424"/><use href="#g23" x="440"/></g><g fill="#008000"><use href="#g30" x="448"/><use href="#g78" x="456"/><use href="#g32" x="464"/><use href="#g38" x="472"/><use href="#g2b" x="480"/><use href="#g76" x="488"/><use href="#g61" x="496"/><use href="#g72" x="504"/><use href="#g5f" x="512"/><use href="#g31" x="520"/><use href="#g43" x="528"/></g></g>
<g transform="translate(84 651)"><g fill="#000000"><use href="#g2e" x="0"/><use href="#g74" x="8"/><use href="#g65" x="16"/><use href="#g78" x="24"/><use href="#g74" x="32"/><use href="#g3a" x="40"/><use href="#g30" x="48"/><use href="#g30" x="56"/><use href="#g30" x="64"/><use href="#g41" x="72"/><use href="#g38" x="80"/><use href="#g46" x="88"/><use href="#g38" x="96"/><use href="#g34" x="104"/></g><g fill="#000080"><use href="#g4d" x="248"/><use href="#g4f" x="256"/><use href="#g56" x="264"/></g><g fill="#000080"><use href="#g52" x="376"/><use href="#g31" x="384"/><use href="#g2c" x="392"/><use href="#g52" x="408"/><use href="#g35" x="416"/></g></g>
<g transform="translate(84 667)"><g fill="#000000"><use href="#g2e" x="0"/><use href="#g74" x="8"/><use href="#g65" x="16"/><use href="#g78" x="24"/><use href="#g74" x="32"/><use href="#g3a" x="40"/><use href="#g30" x="48"/><use href="#g30" x="56"/><use href="#g30" x="64"/><use href="#g41" x="72"/><use href="#g38" x="80"/><use href="#g46" x="88"/><use href="#g38" x="96"/><use href="#g36" x="104"/></g><g fill="#000080"><use href="#g4d" x="248"/><use href="#g4f" x="256"/><use href="#g56" x="264"/><use href="#g53" x="272"/></g><g fill="#000080"><use href="#g52" x="376"/><use href="#g32" x="384"/><use href="#g2c" x="392"/><use href="#g23" x="408"/></g><g fill="#008000"><use href="#g31" x="416"/></g></g>
<g transform="translate(84 683)"><g fill="#000000"><use href="#g2e" x="0"/><use href="#g74" x="8"/><use href="#g65" x="16"/><use href="#g78" x="24"/><use href="#g74" x="32"/><use href="#g3a" x="40"/><use href="#g30" x="48"/><use href="#g30" x="56"/><use href="#g30" x="64"/><use href="#g41" x="72"/><use href="#g38" x="80"/><use href="#g46" x="88"/><use href="#g38" x="96"/><use href="#g38" x="104"/></g><g fill="#000080"><use href="#g42" x="248"/><use href="#g4c" x="256"/></g><g fill="#000080"><use href="#g73" x="376"/><use href="#g75" x="384"/><use href="#g62" x="392"/><use href="#g5f" x="400"/><use href="#g42" x="408"/><use href="#g42" x="416"/><use href="#g30" x="424"/><use href="#g45" x="432"/><use href="#g41" x="440"/></g></g></svg>
<svg id="ov" width="1062" height="689" viewBox="0 0 1062 689" style="position:absolute;left:0;top:0">
<defs><clipPath id="fc"><rect x="830" y="425" width="150" height="126"/></clipPath></defs>
<defs>
<linearGradient id="wt" x1="0" y1="0" x2="1" y2="0"><stop offset="0" stop-color="#4ad2ff"/><stop offset=".7" stop-color="#3098f4"/><stop offset="1" stop-color="#2a34d8"/></linearGradient>
<linearGradient id="wf" x1="0" y1="0" x2="1" y2="1"><stop offset="0" stop-color="#38a8f8"/><stop offset="1" stop-color="#2a5cd8"/></linearGradient>
<linearGradient id="df" x1="0" y1="0" x2="1" y2="1"><stop offset="0" stop-color="#3a78b8"/><stop offset="1" stop-color="#0a3a78"/></linearGradient>
<linearGradient id="tb" x1="0" y1="0" x2="0" y2="1"><stop offset="0" stop-color="#575757"/><stop offset="1" stop-color="#454545"/></linearGradient>
</defs>
<rect x="0" y="0" width="1062" height="28" fill="url(#tb)"/>
<rect x="0" y="0" width="1062" height="4" fill="#343434"/>
<rect x="0" y="27" width="1062" height="1" fill="#3a3a3a"/>
<rect x="3" y="4" width="192" height="24" fill="#787878"/>
<rect x="3" y="27" width="192" height="1" fill="#6c6c6c"/>
<rect x="0" y="0" width="3" height="689" fill="#353535"/>
<g shape-rendering="crispEdges"><rect x="15" y="7" width="14" height="14" fill="url(#wf)"/><rect x="15" y="7" width="14" height="3" fill="url(#wt)"/><rect x="17" y="9" width="10" height="1" fill="#2a50e0" opacity=".8"/><rect x="16" y="10" width="12" height="10" fill="#f2fcff"/>
<rect x="20" y="10" width="11" height="13" fill="url(#df)"/><rect x="21" y="11" width="9" height="11" fill="#fbfdff"/>
<rect x="22" y="12" width="4" height="1" fill="#3a3a3a"/>
<rect x="24" y="14" width="5" height="1" fill="#3a3a3a"/>
<rect x="24" y="16" width="5" height="1" fill="#3a3a3a"/>
<rect x="22" y="18" width="4" height="1" fill="#3a3a3a"/>
<rect x="24" y="20" width="5" height="1" fill="#3a3a3a"/>
</g>
<g shape-rendering="crispEdges"><rect x="207" y="8" width="15" height="15" fill="url(#wf)"/><rect x="207" y="8" width="15" height="3" fill="url(#wt)"/><rect x="209" y="10" width="11" height="1" fill="#2a50e0" opacity=".8"/><rect x="208" y="11" width="13" height="11" fill="#f2fcff"/></g>
<text x="214.6" y="21.0" font-family="Liberation Serif, serif" font-weight="bold" font-size="13.5" fill="#2a8a00" stroke="#2a8a00" stroke-width="0.4" text-anchor="middle">s</text>
<circle cx="209.9" cy="14.9" r="1.15" fill="#2a8a00"/><path d="M208.8,14.9C208.8,13.6 209.6,12.6 211,12.2L211.1,12.7C210.3,13.1 209.9,13.7 210,14.4Z" fill="#2a8a00"/>
<circle cx="219.1" cy="13.3" r="1.15" fill="#2a8a00"/><path d="M220.25,13.3C220.25,14.6 219.4,15.6 218,16L217.9,15.5C218.7,15.1 219.1,14.5 219,13.8Z" fill="#2a8a00"/>
<g shape-rendering="crispEdges"><rect x="399" y="8" width="15" height="15" fill="url(#wf)"/><rect x="399" y="8" width="15" height="3" fill="url(#wt)"/><rect x="401" y="10" width="11" height="1" fill="#2a50e0" opacity=".8"/><rect x="400" y="11" width="13" height="11" fill="#f2fcff"/></g>
<path d="M406.5,12.3L410.7,14.6V18.3L406.5,20.7L402.3,18.3V14.6Z" fill="#dfe9fb" stroke="#2b2bff" stroke-width="1.1"/>
<g shape-rendering="crispEdges"><rect x="590" y="8" width="15" height="15" fill="url(#wf)"/><rect x="590" y="8" width="15" height="3" fill="url(#wt)"/><rect x="592" y="10" width="11" height="1" fill="#2a50e0" opacity=".8"/><rect x="591" y="11" width="13" height="11" fill="#f2fcff"/></g>
<rect x="595.9" y="12.6" width="3.6" height="1.9" fill="#fff" stroke="#0b2a6e" stroke-width="1"/>
<path d="M595.7,14.6L594.4,20.5M599.7,14.6L600.7,20.5" fill="none" stroke="#0b2a6e" stroke-width="1.25" stroke-linecap="round"/>
<path d="M599.4,15.8L595,20" fill="none" stroke="#0b2a6e" stroke-width="0.9"/>
<g shape-rendering="crispEdges"><rect x="782" y="8" width="16" height="15" fill="url(#wf)"/><rect x="782" y="8" width="16" height="3" fill="url(#wt)"/><rect x="784" y="10" width="12" height="1" fill="#2a50e0" opacity=".8"/><rect x="783" y="11" width="14" height="11" fill="#f2fcff"/></g>
<g shape-rendering="crispEdges">
<rect x="787" y="11" width="1" height="3" fill="#0a2a9a"/><rect x="786" y="12" width="3" height="1" fill="#0a2a9a"/><rect x="787" y="12" width="1" height="1" fill="#20e8f8"/>
<rect x="790" y="12" width="3" height="1" fill="#0a50c0"/>
<rect x="787" y="15" width="1" height="3" fill="#0a2a9a"/><rect x="786" y="16" width="3" height="1" fill="#0a2a9a"/><rect x="787" y="16" width="1" height="1" fill="#20e8f8"/>
<rect x="790" y="16" width="3" height="1" fill="#0a50c0"/>
<rect x="787" y="19" width="1" height="3" fill="#0a2a9a"/><rect x="786" y="20" width="3" height="1" fill="#0a2a9a"/><rect x="787" y="20" width="1" height="1" fill="#20e8f8"/>
<rect x="790" y="20" width="3" height="1" fill="#0a50c0"/>
</g>
<g shape-rendering="crispEdges"><rect x="974" y="8" width="15" height="15" fill="url(#wf)"/><rect x="974" y="8" width="15" height="3" fill="url(#wt)"/><rect x="976" y="10" width="11" height="1" fill="#2a50e0" opacity=".8"/><rect x="975" y="11" width="13" height="11" fill="#f2fcff"/>
<rect x="980" y="13" width="10" height="11" fill="url(#df)"/><rect x="981" y="14" width="8" height="9" fill="#fbfdff"/>
<rect x="983" y="15" width="4" height="1" fill="#1010b0"/>
<rect x="983" y="17" width="4" height="1" fill="#1010b0"/>
<rect x="983" y="19" width="4" height="1" fill="#1010b0"/>
<rect x="983" y="21" width="4" height="1" fill="#1010b0"/>
</g>
<path d="M975.2,12.6C976.6,14 977.6,14.6 978.6,14.7L978.3,12.3L982,15.4L978.6,18.7L978.7,16.6C977.2,16.4 976,15 975.2,12.6Z" fill="#35d030" stroke="#0a4a10" stroke-width="0.9" stroke-linejoin="round"/>
<rect x="166.3" y="8.3" width="15.4" height="15.4" rx="2.2" fill="#8a8a8a" opacity=".55"/><rect x="167" y="9" width="14" height="14" rx="1.6" fill="#e0341f"/><rect x="168" y="10" width="12" height="12" rx="0.8" fill="#e9794c"/><rect x="168.2" y="10.2" width="11.6" height="11.6" rx="0.8" fill="none" stroke="#f0a080" stroke-width="0.5" opacity=".7"/><path d="M171.1,13.1L176.9,18.9M176.9,13.1L171.1,18.9" stroke="#fff" stroke-width="2" stroke-linecap="butt"/>
<rect x="358.3" y="9.3" width="15.4" height="15.4" rx="2.2" fill="#3d3d3d" opacity=".55"/><rect x="359" y="10" width="14" height="14" rx="1.6" fill="#c9c9c9"/><rect x="360" y="11" width="12" height="12" rx="0.8" fill="#b9b9b9"/><path d="M363.1,14.1L368.9,19.9M368.9,14.1L363.1,19.9" stroke="#fff" stroke-width="2" stroke-linecap="butt"/>
<rect x="549.3" y="9.3" width="15.4" height="15.4" rx="2.2" fill="#3d3d3d" opacity=".55"/><rect x="550" y="10" width="14" height="14" rx="1.6" fill="#c9c9c9"/><rect x="551" y="11" width="12" height="12" rx="0.8" fill="#b9b9b9"/><path d="M554.1,14.1L559.9,19.9M559.9,14.1L554.1,19.9" stroke="#fff" stroke-width="2" stroke-linecap="butt"/>
<rect x="741.3" y="9.3" width="15.4" height="15.4" rx="2.2" fill="#3d3d3d" opacity=".55"/><rect x="742" y="10" width="14" height="14" rx="1.6" fill="#c9c9c9"/><rect x="743" y="11" width="12" height="12" rx="0.8" fill="#b9b9b9"/><path d="M746.1,14.1L751.9,19.9M751.9,14.1L746.1,19.9" stroke="#fff" stroke-width="2" stroke-linecap="butt"/>
<rect x="933.3" y="9.3" width="15.4" height="15.4" rx="2.2" fill="#3d3d3d" opacity=".55"/><rect x="934" y="10" width="14" height="14" rx="1.6" fill="#c9c9c9"/><rect x="935" y="11" width="12" height="12" rx="0.8" fill="#b9b9b9"/><path d="M938.1,14.1L943.9,19.9M943.9,14.1L938.1,19.9" stroke="#fff" stroke-width="2" stroke-linecap="butt"/>
<text x="98.4" y="20" font-family="Liberation Sans, sans-serif" font-size="11.6" fill="#f2f2f2" text-anchor="middle" textLength="54.2" lengthAdjust="spacingAndGlyphs">IDA View-A</text>
<text x="290.1" y="21" font-family="Liberation Sans, sans-serif" font-size="11.6" fill="#f2f2f2" text-anchor="middle" textLength="72" lengthAdjust="spacingAndGlyphs">Strings window</text>
<text x="481.3" y="21" font-family="Liberation Sans, sans-serif" font-size="11.6" fill="#f2f2f2" text-anchor="middle" textLength="54.7" lengthAdjust="spacingAndGlyphs">Hex View-1</text>
<text x="673.5" y="21" font-family="Liberation Sans, sans-serif" font-size="11.6" fill="#f2f2f2" text-anchor="middle" textLength="49.7" lengthAdjust="spacingAndGlyphs">Structures</text>
<text x="864.5" y="21" font-family="Liberation Sans, sans-serif" font-size="11.6" fill="#f2f2f2" text-anchor="middle" textLength="31" lengthAdjust="spacingAndGlyphs">Enums</text>
<text x="1038.8" y="21" font-family="Liberation Sans, sans-serif" font-size="11.6" fill="#f2f2f2" text-anchor="start" textLength="36" lengthAdjust="spacingAndGlyphs">Imports</text>
<g clip-path="url(#fc)">
<path d="M879.3,550.5C878.9,549.8 877.8,547.1 876.7,546.0C875.6,544.9 874.9,545.1 872.7,543.7C870.5,542.3 866.5,540.0 863.5,537.8C860.5,535.6 857.1,533.1 854.4,530.7C851.7,528.3 849.2,526.1 847.3,523.6C845.3,521.1 843.8,518.5 842.7,515.5C841.6,512.5 841.0,508.7 840.7,505.3C840.4,501.9 840.5,498.4 840.9,495.2C841.3,492.0 841.8,489.4 843.0,486.0C844.2,482.6 846.2,478.3 848.3,474.7C850.4,471.1 852.5,468.0 855.4,464.6C858.3,461.2 862.2,457.3 865.6,454.4C869.0,451.5 872.2,449.3 875.7,447.3C879.2,445.3 883.5,443.5 886.9,442.2C890.3,440.9 892.1,440.4 896.0,439.7C899.9,438.9 906.0,437.8 910.0,437.7C914.0,437.6 916.9,438.4 920.3,439.1C923.7,439.9 927.1,440.9 930.5,442.2C933.9,443.5 937.7,445.0 940.7,446.8C943.8,448.6 946.3,450.4 948.8,452.9C951.3,455.3 953.9,458.2 955.9,461.5C957.9,464.8 959.6,468.8 961.0,472.7C962.4,476.6 963.2,481.1 964.0,484.9C964.8,488.6 965.4,491.8 965.8,495.2C966.1,498.6 966.3,501.9 966.1,505.3C965.9,508.7 965.4,512.1 964.5,515.5C963.6,518.9 962.4,522.7 961.0,525.7C959.6,528.8 957.9,531.3 955.9,533.8C953.9,536.3 951.3,538.9 948.8,540.9C946.3,542.9 943.8,544.3 940.7,545.5C937.7,546.7 933.6,547.6 930.5,548.2C927.4,548.8 923.4,548.6 921.8,549.0C920.1,549.4 920.8,550.2 920.6,550.5" fill="#fff" stroke="#000" stroke-width="1.8" stroke-linecap="round" stroke-linejoin="round"/>
<path d="M886.4,451.4C889,449.4 892,447.1 895.4,446.9C898.7,446.8 901,449.6 901.3,452.7C901.4,454 900.2,454.4 899.2,453.6C897.7,452.3 897,450.8 895.6,449.8C893.5,448.6 889.6,450.2 886.4,451.4Z" fill="#000"/>
<path d="M933.3,456.9C932,454.6 934.6,451.2 938.2,450.6C940.6,450.3 942.7,451.4 943.7,452.9C941.4,452.4 939.3,452.9 938,454.4C936.8,455.8 935.2,458.2 933.3,456.9Z" fill="#000"/>
<path d="M870.7,472.3C871.3,471.3 873.1,468.1 874.5,466.5C875.9,464.9 876.7,463.6 878.8,462.6C880.9,461.6 884.2,460.4 886.9,460.3C889.6,460.2 892.9,461.2 895.0,461.9C897.1,462.6 898.2,463.4 899.5,464.3C900.8,465.2 902.2,466.7 902.7,467.2" fill="none" stroke="#000" stroke-width="0.9"/>
<path d="M870.9,472.5C871.8,472.1 874.0,471.1 876.0,470.3C878.0,469.6 880.8,468.6 882.8,468.0C884.8,467.4 886.3,467.2 888.0,467.0C889.7,466.8 891.3,466.6 893.0,466.6C894.7,466.6 896.5,466.8 898.0,467.0C899.5,467.2 901.5,467.8 902.2,467.9" fill="none" stroke="#000" stroke-width="0.9"/>
<path d="M892.3,466.4C892.3,464.4 893.3,462.6 894.6,462.2C897.3,462.6 900.3,464.7 901.5,467.5C898.6,467.1 895.3,466.5 892.3,466.4Z" fill="#000"/>
<path d="M865.8,472.5L870.5,473.4L878.8,478.6" fill="none" stroke="#222" stroke-width="0.8"/>
<path d="M866.5,474.5L868.4,472.2" fill="none" stroke="#555" stroke-width="0.7"/>
<path d="M896.8,475L902.6,469" fill="none" stroke="#999" stroke-width="0.7"/>
<path d="M932.6,469.2C933.2,468.7 934.6,467.1 936.0,466.2C937.4,465.3 938.9,464.2 940.7,464.0C942.5,463.8 944.8,463.9 946.7,464.7C948.6,465.4 950.4,467.1 952.0,468.5C953.6,469.9 955.7,472.5 956.4,473.3" fill="none" stroke="#000" stroke-width="0.9"/>
<path d="M933.4,469.6C934.2,469.7 936.6,470.0 938.5,470.2C940.4,470.4 942.7,470.5 944.7,470.8C946.7,471.1 948.5,471.4 950.5,471.9C952.5,472.4 955.4,473.4 956.4,473.7" fill="none" stroke="#000" stroke-width="0.9"/>
<path d="M947.6,470.9C947.6,469.4 948.3,467.4 949.5,466.6C952.3,468.2 954.5,470.6 955.6,473.2C953,472.3 950.2,471.4 947.6,470.9Z" fill="#000"/>
<path d="M932.1,469.0C932.4,469.7 932.9,471.7 933.6,473.0C934.4,474.3 935.5,475.7 936.6,476.8C937.8,477.9 939.1,478.9 940.5,479.6C941.9,480.4 944.0,481.0 944.7,481.3" fill="none" stroke="#111" stroke-width="0.8"/>
<path d="M955.3,479.8L957.9,476.2" fill="none" stroke="#222" stroke-width="0.8"/>
<path d="M901.5,484.1C900.4,485.1 896.9,488.1 895.1,489.8C893.3,491.6 891.5,493.3 890.7,494.6C889.9,495.9 889.7,497.0 890.1,497.6C890.5,498.2 891.9,498.1 893.0,498.4C894.1,498.7 896.0,499.3 896.6,499.5" fill="none" stroke="#000" stroke-width="1"/>
<path d="M890,500L890.3,505" fill="none" stroke="#999" stroke-width="0.8"/>
<path d="M932.0,485.3C932.9,485.9 935.8,487.6 937.3,488.7C938.8,489.8 940.6,491.0 941.3,492.2C942.0,493.4 941.5,494.7 941.6,496.0C941.7,497.3 941.8,499.2 941.8,499.8" fill="none" stroke="#000" stroke-width="0.9"/>
<path d="M941.8,500L942.6,505.5" fill="none" stroke="#999" stroke-width="0.8"/>
<path d="M896.6,499.3C898.0,498.5 902.3,496.0 904.9,494.7C907.5,493.4 910.0,492.1 912.4,491.3C914.8,490.5 916.8,490.0 919.2,489.8C921.6,489.6 924.6,489.7 926.7,490.2C928.8,490.7 930.2,491.6 932.0,492.8C933.8,494.0 935.9,496.2 937.3,497.3C938.7,498.4 939.8,498.9 940.3,499.2C940.0,499.8 939.7,501.3 938.8,502.8C937.9,504.3 936.8,506.9 935.0,508.2C933.2,509.5 930.8,510.1 928.2,510.6C925.6,511.1 922.2,511.2 919.2,511.0C916.2,510.8 912.9,510.1 910.1,509.1C907.3,508.1 904.9,506.5 902.6,504.9C900.4,503.3 897.6,500.2 896.6,499.3Z" fill="#fff" stroke="#000" stroke-width="1.2"/>
<path d="M900.2,502.2C901.0,501.9 903.4,501.2 905.0,500.4C906.6,499.6 908.5,498.2 910.1,497.6C911.7,497.0 913.0,497.1 914.5,497.0C916.0,496.9 917.6,496.8 919.2,496.9C920.8,497.0 922.5,497.2 924.0,497.4C925.5,497.6 926.8,497.6 928.2,498.1C929.7,498.6 931.1,499.8 932.7,500.6C934.3,501.5 936.8,502.8 937.6,503.2C937.2,504.0 936.6,507.0 935.0,508.2C933.4,509.4 930.8,510.1 928.2,510.6C925.6,511.1 922.2,511.2 919.2,511.0C916.2,510.8 912.9,510.1 910.1,509.1C907.3,508.1 904.2,506.0 902.6,504.9C901.0,503.8 900.6,502.6 900.2,502.2Z" fill="#000"/>
<path d="M899.3,498.6L901.6,502.2" stroke="#000" stroke-width="0.8"/>
<path d="M901.8,497.2L904,500.8" stroke="#000" stroke-width="0.8"/>
<path d="M904.6,495.6L906.4,499.6" stroke="#000" stroke-width="0.8"/>
<path d="M908.2,493.6L909.4,498" stroke="#000" stroke-width="0.8"/>
<path d="M912,492L912.6,497.2" stroke="#000" stroke-width="0.8"/>
<path d="M916.6,490.6L916.8,497" stroke="#000" stroke-width="0.8"/>
<path d="M922.8,490.4L923,497.2" stroke="#000" stroke-width="0.8"/>
<path d="M928.8,491.6L929,498.4" stroke="#000" stroke-width="0.8"/>
<path d="M932.6,494L933,500.6" stroke="#000" stroke-width="0.8"/>
<path d="M935.6,496.4L935.4,502" stroke="#000" stroke-width="0.8"/>
<path d="M938,498.4L937.4,502.8" stroke="#000" stroke-width="0.8"/>
<rect x="918.3" y="509.6" width="2.6" height="1.1" fill="#fff"/>
<rect x="922.4" y="509.6" width="2.0" height="1.1" fill="#fff"/>
<rect x="926.2" y="509.6" width="1.3" height="1.1" fill="#fff"/>
</g>
<path d="M678.6,500L741.5,477.6V488.4H805.3V511.4H741.5V522.2Z" fill="none" stroke="#ed1c24" stroke-width="2.6" stroke-linejoin="round"/>
<text x="844.6" y="442.7" font-family="Liberation Sans, sans-serif" font-size="16.4" fill="#d31f30">I see what you</text>
<text x="893.7" y="541.2" font-family="Liberation Sans, sans-serif" font-size="17.6" fill="#d31f30">did there</text>
</svg>
</body></html>
